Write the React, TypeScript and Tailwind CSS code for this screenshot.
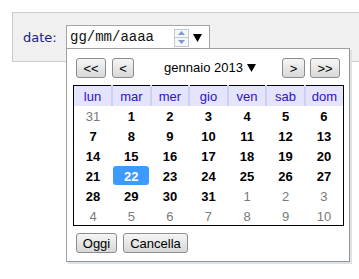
const weekdays = ["lun", "mar", "mer", "gio", "ven", "sab", "dom"];

type Day = { n: number; cur: boolean };

const weeks: Day[][] = [
  [31, 1, 2, 3, 4, 5, 6],
  [7, 8, 9, 10, 11, 12, 13],
  [14, 15, 16, 17, 18, 19, 20],
  [21, 22, 23, 24, 25, 26, 27],
  [28, 29, 30, 31, 1, 2, 3],
  [4, 5, 6, 7, 8, 9, 10],
].map((row, r) =>
  row.map((n) => ({
    n,
    cur: !((r === 0 && n > 20) || (r >= 4 && n < 15)),
  })),
);

function Btn({ children, className = "" }: { children: React.ReactNode; className?: string }) {
  return (
    <button
      className={
        "flex h-[20px] items-center justify-center rounded-[3px] border border-[#8c8c8c] bg-gradient-to-b from-[#f6f6f6] to-[#d8d8d8] text-[13px] leading-none text-black " +
        className
      }
    >
      {children}
    </button>
  );
}

export default function App() {
  return (
    <div className="h-[279px] w-[359px] overflow-hidden bg-white font-['Liberation_Sans',Arial,sans-serif]">
      <div className="ml-3 mt-3 flex h-[50px] w-[360px] items-start border border-[#cccccc] bg-[#f0f0f0] pl-[10px] pt-[12px]">
        <span className="mt-[3px] w-[43px] font-['DejaVu_Sans',sans-serif] text-[13px] text-[#202080]">
          date:
        </span>
        <div className="relative">
          <div className="flex h-[25px] w-[144px] items-center border border-[#a5a5a5] bg-white pl-[3px]">
            <span className="font-['Liberation_Mono',monospace] text-[14px] text-[#111]">gg/mm/aaaa</span>
            {/* spinner */}
            <div className="ml-[20px] flex h-[18px] w-[15px] flex-col border border-[#c4c8d0] bg-[#f4f6f8]">
              <div className="flex flex-1 items-center justify-center border-b border-[#c4c8d0]">
                <svg width="7" height="4" viewBox="0 0 7 4"><path d="M0 4 L3.5 0 L7 4Z" fill="#7c9cc8" /></svg>
              </div>
              <div className="flex flex-1 items-center justify-center">
                <svg width="7" height="4" viewBox="0 0 7 4"><path d="M0 0 L3.5 4 L7 0Z" fill="#7c9cc8" /></svg>
              </div>
            </div>
            <svg className="ml-[4px]" width="9" height="8" viewBox="0 0 9 8"><path d="M0 0 H9 L4.5 8Z" fill="#000" /></svg>
          </div>

          {/* popup */}
          <div className="absolute left-0 top-[23px] z-10 w-[284px] border border-[#a0a0a0] border-b-[#8a96a2] border-r-[#8a96a2] bg-white pb-[8px] shadow-[2px_2px_0_#e2e2e2]">
            <div className="flex items-center pl-[9px] pr-[9px] pt-[9px]">
              <Btn className="w-[30px]">&lt;&lt;</Btn>
              <Btn className="ml-[6px] w-[22px]">&lt;</Btn>
              <div className="flex flex-1 items-center justify-center gap-[4px] pl-[4px] text-[13px] text-black">
                gennaio 2013
                <svg width="9" height="8" viewBox="0 0 9 8"><path d="M0 0 H9 L4.5 8Z" fill="#000" /></svg>
              </div>
              <Btn className="w-[23px]">&gt;</Btn>
              <Btn className="ml-[5px] w-[30px]">&gt;&gt;</Btn>
            </div>

            <table className="ml-[6px] mt-[7px] w-[271px] table-fixed border-collapse border border-black text-[13px]">
              <thead>
                <tr className="h-[20px] bg-[#e4e4fc]">
                  {weekdays.map((w, i) => (
                    <th
                      key={w}
                      className={
                        "p-0 pt-[1px] text-center font-normal leading-none text-[#3010c8] " +
                        (i > 0 ? "border-l-2 border-[#cfcff0]" : "")
                      }
                    >
                      {w}
                    </th>
                  ))}
                </tr>
              </thead>
              <tbody>
                {weeks.map((row, r) => (
                  <tr key={r} className="h-[20px]">
                    {row.map((d, c) => {
                      const sel = r === 3 && c === 1;
                      return (
                        <td key={c} className="p-0 px-[1px] pt-[2px] text-center leading-none">
                          {sel ? (
                            <div className="mx-auto -mt-[2px] flex h-[19px] w-[36px] items-center justify-center rounded-[3px] bg-[#3d9bff] pt-[1px] font-bold text-white">
                              {d.n}
                            </div>
                          ) : (
                            <span className={d.cur ? "font-bold text-black" : "text-[#7a7a7a]"}>{d.n}</span>
                          )}
                        </td>
                      );
                    })}
                  </tr>
                ))}
              </tbody>
            </table>

            <div className="mt-[7px] flex gap-[6px] pl-[9px]">
              <Btn className="w-[41px]">Oggi</Btn>
              <Btn className="w-[65px]">Cancella</Btn>
            </div>
          </div>
        </div>
      </div>
    </div>
  );
}
